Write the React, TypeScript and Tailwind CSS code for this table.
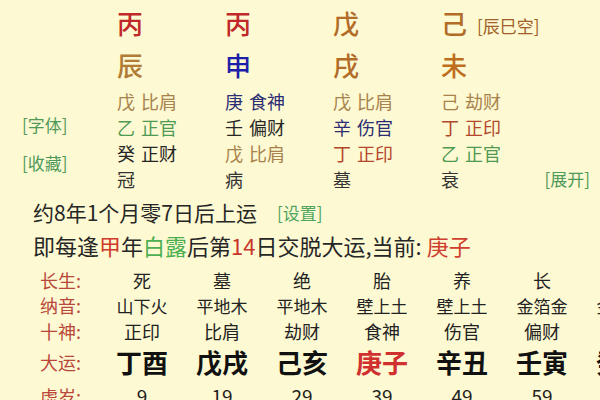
const TAN = "text-[#a8824c]";
const GREEN = "text-[#4f9a52]";
const NAVY = "text-[#2c2c72]";
const INK = "text-[#262626]";
const RUST = "text-[#b4462c]";

type Cell = { t: string; c: string };

const pillars: { stem: Cell; branch: Cell; hidden: Cell[]; state: string }[] = [
  {
    stem: { t: "丙", c: "text-[#c0282a]" },
    branch: { t: "辰", c: "text-[#b07c36]" },
    hidden: [
      { t: "戊 比肩", c: TAN },
      { t: "乙 正官", c: GREEN },
      { t: "癸 正财", c: INK },
    ],
    state: "冠",
  },
  {
    stem: { t: "丙", c: "text-[#c0282a]" },
    branch: { t: "申", c: "text-[#1c20a8]" },
    hidden: [
      { t: "庚 食神", c: NAVY },
      { t: "壬 偏财", c: INK },
      { t: "戊 比肩", c: TAN },
    ],
    state: "病",
  },
  {
    stem: { t: "戊", c: "text-[#b26c28]" },
    branch: { t: "戌", c: "text-[#b26c28]" },
    hidden: [
      { t: "戊 比肩", c: TAN },
      { t: "辛 伤官", c: NAVY },
      { t: "丁 正印", c: RUST },
    ],
    state: "墓",
  },
  {
    stem: { t: "己", c: "text-[#b26c28]" },
    branch: { t: "未", c: "text-[#bd6e1e]" },
    hidden: [
      { t: "己 劫财", c: TAN },
      { t: "丁 正印", c: RUST },
      { t: "乙 正官", c: GREEN },
    ],
    state: "衰",
  },
];

const luck = [
  { cs: "死", ny: "山下火", ss: "正印", dy: "丁酉", age: 9 },
  { cs: "墓", ny: "平地木", ss: "比肩", dy: "戊戌", age: 19 },
  { cs: "绝", ny: "平地木", ss: "劫财", dy: "己亥", age: 29 },
  { cs: "胎", ny: "壁上土", ss: "食神", dy: "庚子", age: 39, now: true },
  { cs: "养", ny: "壁上土", ss: "伤官", dy: "辛丑", age: 49 },
  { cs: "长", ny: "金箔金", ss: "偏财", dy: "壬寅", age: 59 },
  { cs: "沐", ny: "金箔金", ss: "正财", dy: "癸卯", age: 69 },
];

function Label({ children }: { children: string }) {
  return (
    <div className="w-[62px] shrink-0 text-[18px] text-[#b8473a]">
      {children}:
    </div>
  );
}

export default function App() {
  return (
    <div className="h-[400px] w-[600px] overflow-hidden bg-[#fdf9d2] font-['Noto_Sans_CJK_SC','Noto_Sans',sans-serif] text-[#222]">
      {/* pillars */}
      <div className="flex">
        <div className="flex w-[117px] shrink-0 flex-col gap-[12px] pl-[22px] pt-[112px] text-[17px] text-[#4f9a5a]">
          <div className="flex h-[26px] items-center">[字体]</div>
          <div className="flex h-[26px] items-center">[收藏]</div>
        </div>
        <div className="grid flex-1 grid-cols-[108px_108px_108px_1fr]">
          {pillars.map((p, i) => (
            <div key={i} className="flex flex-col">
              <div className="flex h-[46px] items-center gap-[10px]">
                <span className={`text-[26px] font-medium leading-none ${p.stem.c}`}>
                  {p.stem.t}
                </span>
                {i === 3 && (
                  <span className="mt-[6px] text-[17px] text-[#a0622a]">[辰巳空]</span>
                )}
              </div>
              <div className={`flex h-[38px] items-center text-[26px] font-medium leading-none ${p.branch.c}`}>
                {p.branch.t}
              </div>
              <div className="mt-[4px] flex flex-col text-[18px]">
                {p.hidden.map((h, j) => {
                  const [stem, god] = h.t.split(" ");
                  return (
                    <div key={j} className={`flex h-[26px] items-center gap-[6px] ${h.c}`}>
                      <span>{stem}</span>
                      <span>{god}</span>
                    </div>
                  );
                })}
                <div className="flex h-[26px] items-center justify-between pr-[10px] text-[#333]">
                  <span>{p.state}</span>
                  {i === 3 && <span className="text-[17px] text-[#4f9a5a]">[展开]</span>}
                </div>
              </div>
            </div>
          ))}
        </div>
      </div>

      {/* start of luck */}
      <div className="mt-[5px] pl-[33px] text-[#262626]">
        <div className="flex h-[32px] items-center text-[21px]">
          <span>约8年1个月零7日后上运</span>
          <span className="ml-[20px] text-[17px] text-[#4fa45e]">[设置]</span>
        </div>
        <div className="flex h-[32px] items-center whitespace-nowrap text-[22px]">
          即每逢<span className="text-[#d03a2a]">甲</span>年
          <span className="text-[#4caf50]">白露</span>后第
          <span className="text-[#c8362a]">14</span>日交脱大运,当前:&nbsp;
          <span className="text-[#d0402e]">庚子</span>
        </div>
      </div>

      {/* luck table */}
      <div className="mt-[6px] flex flex-col pl-[40px] whitespace-nowrap">
        <div className="flex h-[26px] items-center">
          <Label>长生</Label>
          {luck.map((l, i) => (
            <div key={i} className="w-[80px] shrink-0 text-center text-[18px]">{l.cs}</div>
          ))}
        </div>
        <div className="flex h-[25px] items-center">
          <Label>纳音</Label>
          {luck.map((l, i) => (
            <div key={i} className="w-[80px] shrink-0 text-center text-[17px]">{l.ny}</div>
          ))}
        </div>
        <div className="flex h-[27px] items-center">
          <Label>十神</Label>
          {luck.map((l, i) => (
            <div key={i} className="w-[80px] shrink-0 text-center text-[18px]">{l.ss}</div>
          ))}
        </div>
        <div className="flex h-[34px] items-center">
          <Label>大运</Label>
          {luck.map((l, i) => (
            <div
              key={i}
              className={`w-[80px] shrink-0 text-center text-[26px] font-bold leading-none ${l.now ? "text-[#d0302e]" : "text-[#111]"}`}
            >
              {l.dy}
            </div>
          ))}
        </div>
        <div className="flex h-[34px] items-center">
          <Label>虚岁</Label>
          {luck.map((l, i) => (
            <div key={i} className="w-[80px] shrink-0 text-center text-[19px]">{l.age}</div>
          ))}
        </div>
      </div>
    </div>
  );
}
